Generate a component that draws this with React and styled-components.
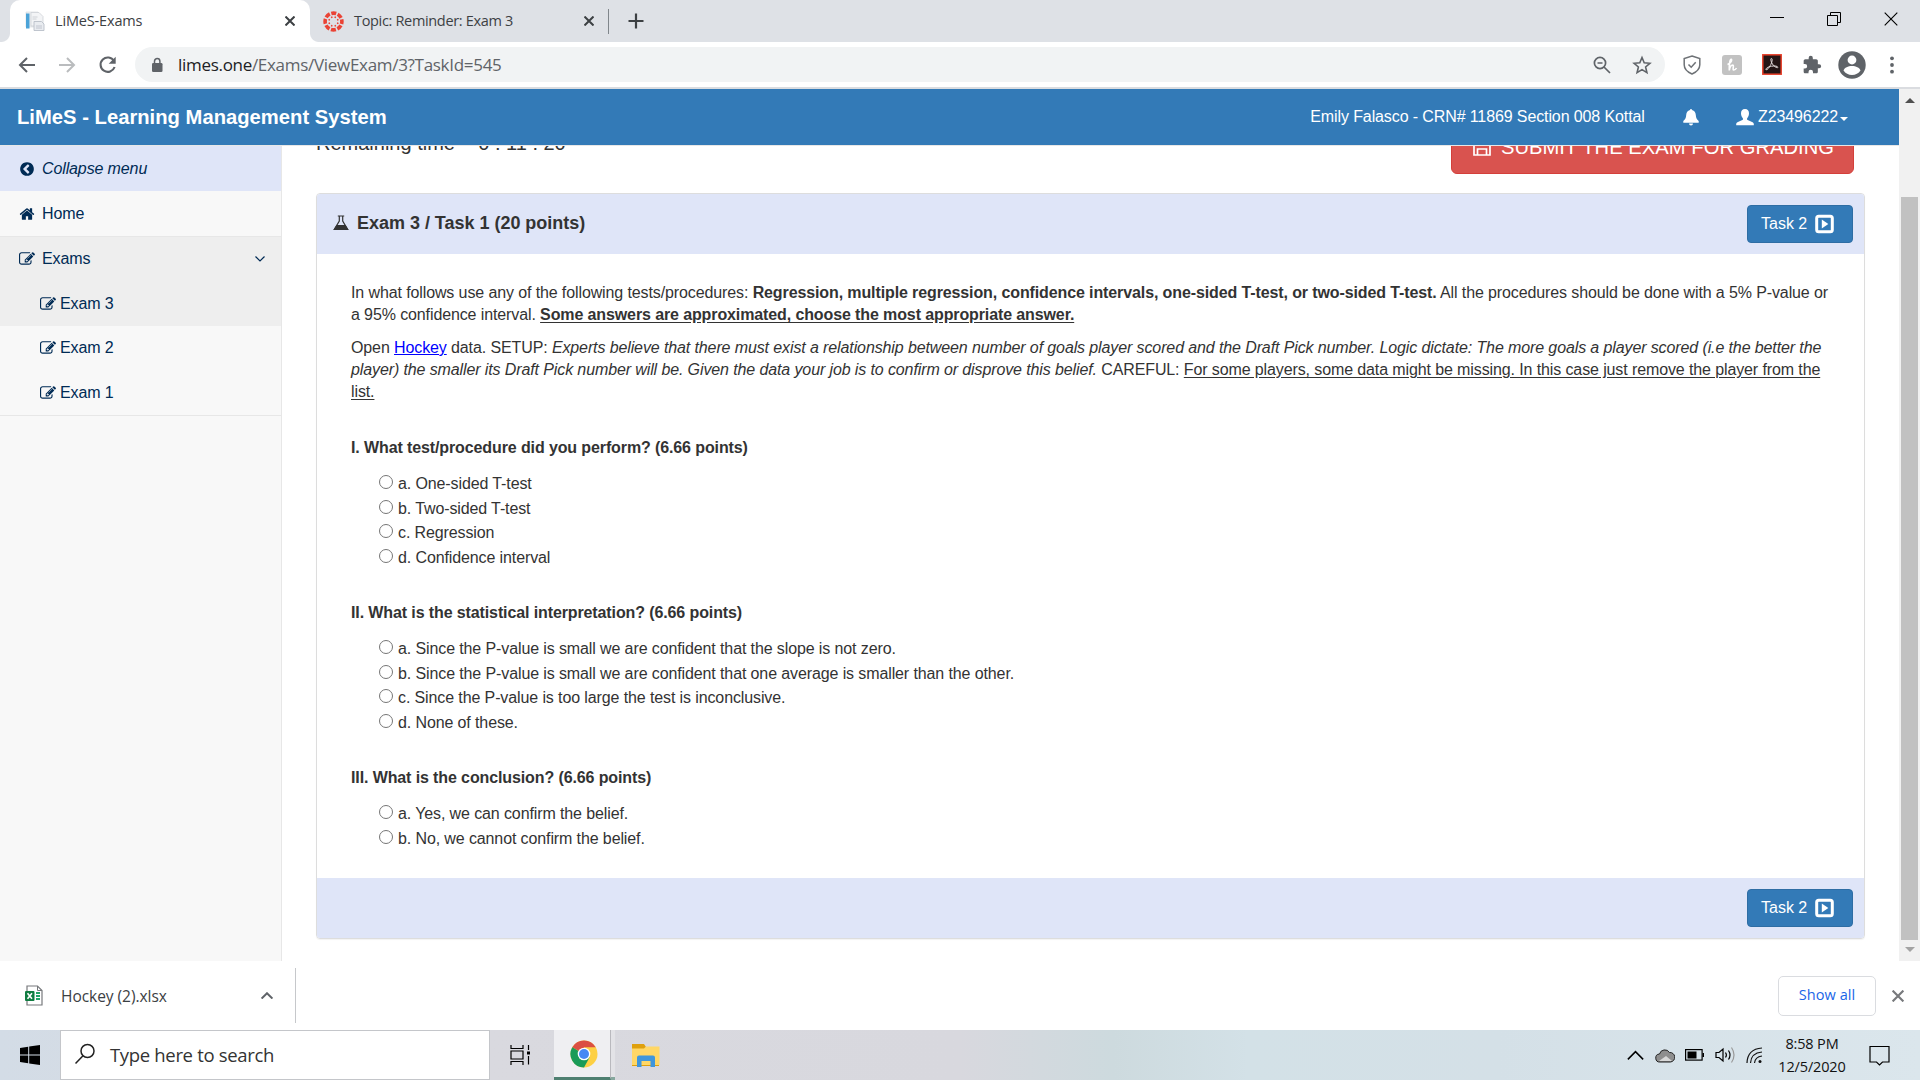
import React from "react";
import styled, { createGlobalStyle } from "styled-components";

const GlobalStyle = createGlobalStyle`
  * { box-sizing: border-box; }
  body {
    margin: 0;
    overflow: hidden;
    background: #fff;
  }
`;

const Screen = styled.div`
  width: 1920px;
  height: 1080px;
  display: flex;
  flex-direction: column;
  overflow: hidden;
  font-family: "Open Sans", "Noto Sans", sans-serif;
  color: #3c4043;
`;

/* browser chrome */

const TabStrip = styled.div`
  height: 42px;
  flex: none;
  display: flex;
  align-items: stretch;
  background: #dee1e6;
  padding-left: 10px;
`;

const Tab = styled.div`
  position: relative;
  width: ${(p) => p.$width}px;
  display: flex;
  align-items: center;
  padding: 0 ${(p) => (p.$active ? 15 : 14)}px 0 ${(p) => p.$pad}px;
  gap: 10px;
  background: ${(p) => (p.$active ? "#fff" : "transparent")};
  border-radius: 10px 10px 0 0;
  font-size: 14.5px;
  letter-spacing: ${(p) => p.$spacing}px;

  /* flared feet of the selected tab */
  &::before,
  &::after {
    content: "";
    display: ${(p) => (p.$active ? "block" : "none")};
    position: absolute;
    bottom: 0;
    width: 9px;
    height: 9px;
  }
  &::before {
    left: -9px;
    background: radial-gradient(circle at 0 0, #dee1e6 8.5px, #fff 9.5px);
  }
  &::after {
    right: -9px;
    background: radial-gradient(circle at 100% 0, #dee1e6 8.5px, #fff 9.5px);
  }
`;

const TabTitle = styled.span`
  flex: 1;
  white-space: nowrap;
  line-height: 20px;
`;

const TabDivider = styled.div`
  width: 1px;
  height: 25px;
  margin: 9px 18px 0 0;
  background: #80868b;
`;

const WindowButtons = styled.div`
  display: flex;
  align-items: center;
  gap: 43px;
  margin-left: auto;
  padding: 0 22px 5px 0;
`;

const Toolbar = styled.div`
  height: 47px;
  flex: none;
  display: flex;
  align-items: center;
  background: #fff;
  border-bottom: 2px solid #dadce0;
  padding: 0 7px 0 17px;
`;

const NavButtons = styled.div`
  display: flex;
  gap: 20px;
  width: 118px;
`;

const Omnibox = styled.div`
  width: 1530px;
  height: 35px;
  display: flex;
  align-items: center;
  border-radius: 18px;
  background: #f1f3f4;
  padding: 0 13px 0 14px;
  gap: 13px;
`;

const OmniboxActions = styled.div`
  display: flex;
  gap: 20px;
`;

const Url = styled.div`
  flex: 1;
  font-size: 17px;
  letter-spacing: -0.3px;
  color: #5f6368;
  line-height: 24px;
  b {
    font-weight: 400;
    color: #202124;
  }
`;

const Extensions = styled.div`
  flex: 1;
  display: grid;
  grid-template-columns: repeat(6, 40px);
  justify-items: center;
  align-items: center;
  margin-left: 7px;
`;

/* page */

const Viewport = styled.div`
  height: 872px;
  flex: none;
  display: flex;
  font-family: "Liberation Sans", Arial, sans-serif;
  font-size: 16px;
  letter-spacing: -0.112px;
  line-height: 22px;
  color: #333;
`;

const Page = styled.div`
  width: 1899px;
  display: flex;
  flex-direction: column;
`;

const Header = styled.header`
  height: 57px;
  flex: none;
  display: flex;
  align-items: center;
  background: #337ab7;
  border-bottom: 1px solid #e7e7e7;
  color: #fff;
  padding: 0 51px 0 17px;
`;

const Brand = styled.div`
  flex: 1;
  font-size: 20.2px;
  font-weight: 700;
  letter-spacing: 0.02px;
  padding-bottom: 1px;
`;

const HeaderItem = styled.div`
  display: flex;
  align-items: center;
  margin-left: ${(p) => p.$gap || 0}px;
`;

const Caret = styled.i`
  border: 4px solid transparent;
  border-top-color: #fff;
  border-bottom: 0;
  margin: 3px 0 0 2px;
`;

const Columns = styled.div`
  flex: 1;
  display: flex;
  min-height: 0;
`;

const Sidebar = styled.nav`
  width: 282px;
  background: #f8f8f8;
  border-right: 1px solid #e7e7e7;
  color: #002b55;
`;

const MenuItem = styled.div`
  height: ${(p) => p.$height || 45}px;
  display: flex;
  align-items: center;
  gap: ${(p) => (p.$child ? 4 : 7)}px;
  padding: 0 16px 0 ${(p) => (p.$child ? 40 : 19)}px;
  background: ${(p) => p.$bg || "transparent"};
  border-bottom: ${(p) => (p.$line ? "1px solid #e7e7e7" : "0")};
  letter-spacing: -0.12px;
  font-style: ${(p) => (p.$italic ? "italic" : "normal")};
  span { flex: 1; }
`;

const Main = styled.main`
  flex: 1;
  padding: 0 34px;
  overflow: hidden;
`;

const TopRow = styled.div`
  display: flex;
  justify-content: space-between;
  height: 47px;
  padding-right: 11px;
`;

const Remaining = styled.div`
  margin-top: -17px;
  font-size: 20px;
  letter-spacing: 0;
  line-height: 28px;
  white-space: pre;
`;

const SubmitButton = styled.div`
  width: 403px;
  height: 52px;
  margin-top: -24px;
  display: flex;
  align-items: center;
  justify-content: center;
  gap: 10px;
  border: 1px solid #d43f3a;
  border-radius: 6px;
  background: #d9534f;
  color: #fff;
  font-size: 20.2px;
  letter-spacing: 0.03px;
  padding: 0 0 2px 2px;
`;

const Panel = styled.section`
  border: 1px solid #ddd;
  border-radius: 4px;
  box-shadow: 0 1px 1px rgba(0, 0, 0, 0.05);
  height: 746px;
  display: flex;
  flex-direction: column;
  overflow: hidden;
`;

const PanelBar = styled.div`
  height: 60px;
  flex: none;
  display: flex;
  align-items: center;
  padding: 0 11px 0 16px;
  background: #dfe5f8;
`;

const PanelTitle = styled.div`
  display: flex;
  align-items: center;
  gap: 8px;
  font-size: 18px;
  font-weight: 700;
  letter-spacing: -0.02px;
  padding-bottom: 2px;
`;

const TaskButton = styled.div`
  width: 106px;
  height: 38px;
  margin-left: auto;
  display: flex;
  align-items: center;
  padding-left: 13px;
  gap: 8px;
  border: 1px solid #2e6da4;
  border-radius: 4px;
  background: #337ab7;
  color: #fff;
  letter-spacing: 0;
`;

const PanelBody = styled.div`
  flex: 1;
  padding: 28px 34px 0;
`;

const Paragraph = styled.p`
  margin: 0 0 11px;
  u { text-underline-offset: 2px; }
`;

const FileLink = styled.a`
  color: #0000ff;
  text-decoration: underline;
`;

const Question = styled.div`
  margin-top: ${(p) => p.$top}px;
`;

const QuestionTitle = styled.div`
  font-weight: 700;
  margin-bottom: 13px;
`;

const Option = styled.label`
  display: flex;
  height: 24.5px;
  align-items: center;
  padding-left: 28px;
  gap: 5px;
`;

const Radio = styled.span`
  width: 14px;
  height: 14px;
  margin-bottom: 4px;
  border: 1px solid #767676;
  border-radius: 50%;
  background: #fff;
`;

const Scrollbar = styled.div`
  width: 21px;
  background: #f1f1f1;
  display: flex;
  flex-direction: column;
  align-items: center;
`;

const ScrollArrow = styled.i`
  border: 5px solid transparent;
  margin: ${(p) => (p.$up ? "4px 0 94px" : "7px 0 0")};
  ${(p) => (p.$up ? "border-bottom-color: #505050;" : "border-top-color: #a3a3a3;")}
`;

const ScrollThumb = styled.div`
  width: 17px;
  height: 743px;
  background: #c1c1c1;
`;

/* downloads */

const DownloadShelf = styled.div`
  height: 69px;
  flex: none;
  display: flex;
  align-items: center;
  background: #fff;
  padding-right: 16px;
`;

const DownloadItem = styled.div`
  width: 296px;
  height: 55px;
  display: flex;
  align-items: center;
  border-right: 1px solid #c6c8cb;
  padding: 0 22px 0 24px;
  gap: 17px;
  font-size: 15.5px;
  letter-spacing: -0.04px;
  span { flex: 1; }
`;

const ShowAll = styled.div`
  width: 98px;
  height: 40px;
  margin: 0 16px 0 auto;
  padding-bottom: 2px;
  border: 1px solid #dadce0;
  border-radius: 5px;
  display: flex;
  align-items: center;
  justify-content: center;
  color: #1a66e8;
  font-size: 14.5px;
  font-weight: 500;
  letter-spacing: 0.1px;
`;

/* taskbar */

const Taskbar = styled.div`
  height: 50px;
  flex: none;
  display: flex;
  align-items: center;
  background: linear-gradient(90deg, #d3dce6 0, #d9d9df 25%, #d8d8de 50%, #cddade 58%, #d3e1e7 65%, #d4e0e7 78%, #dbe6ec 100%);
  color: #111;
`;

const TaskCell = styled.div`
  width: ${(p) => p.$width}px;
  height: 50px;
  display: flex;
  align-items: center;
  justify-content: center;
  padding-right: ${(p) => p.$shift || 0}px;
`;

const ActiveCell = styled(TaskCell)`
  background: #efeff2;
  border-bottom: 3px solid #4f8071;
  border-right: 1px solid #b9b9be;
  padding-left: 3px;
`;

const StackedEdge = styled.div`
  width: 4px;
  height: 50px;
  background: #e3e3e7;
  border-bottom: 3px solid #86a79d;
`;

const SearchBox = styled.div`
  width: 430px;
  height: 50px;
  border: 1px solid #c4c6ca;
  background: #fff;
  display: flex;
  align-items: center;
  gap: 14px;
  padding: 0 0 2px 13px;
  color: #333;
  font-size: 18.5px;
  letter-spacing: -0.33px;
`;

const Tray = styled.div`
  margin-left: auto;
  display: flex;
  align-items: center;
  padding-right: 30px;
`;

const TrayIcons = styled.div`
  display: flex;
  align-items: center;
  gap: 10.5px;
`;

const Clock = styled.div`
  width: 82px;
  margin: 0 16px 1px 8px;
  text-align: center;
  font-size: 14.5px;
  line-height: 23px;
  letter-spacing: -0.15px;
`;

/* icons */

const EditIcon = () => (
  <svg width="16" height="16" viewBox="0 0 1792 1792" fill="currentColor">
    <path d="M888 1184l116-116-152-152-116 116v56h96v96h56zm440-720q-16-16-33 1l-350 350q-17 17-1 33t33-1l350-350q17-17 1-33zm80 594v190q0 119-84.500 203.500t-203.500 84.500h-832q-119 0-203.500-84.500t-84.500-203.500v-832q0-119 84.500-203.500t203.500-84.500h832q63 0 117 25 15 7 18 23 3 17-9 29l-49 49q-14 14-32 8-23-6-45-6h-832q-66 0-113 47t-47 113v832q0 66 47 113t113 47h832q66 0 113-47t47-113v-126q0-13 9-22l64-64q15-15 35-7t20 29zm-96-738l288 288-672 672h-288v-288zm444 132l-92 92-288-288 92-92q28-28 68-28t68 28l152 152q28 28 28 68t-28 68z" />
  </svg>
);

const HomeIcon = () => (
  <svg width="16" height="16" viewBox="0 0 1792 1792" fill="currentColor">
    <path d="M1472 992v480q0 26-19 45t-45 19h-384v-384h-256v384h-384q-26 0-45-19t-19-45v-480q0-1 .5-3t.5-3l575-474 575 474q1 2 1 6zm223-69l-62 74q-8 9-21 11h-3q-13 0-21-7l-692-577-692 577q-12 8-24 7-13-2-21-11l-62-74q-8-10-7-23.500t11-21.500l719-599q32-26 76-26t76 26l244 204v-195q0-14 9-23t23-9h192q14 0 23 9t9 23v408l219 182q10 8 11 21.500t-7 23.500z" />
  </svg>
);

const CollapseIcon = () => (
  <svg width="16" height="16" viewBox="0 0 1792 1792" fill="currentColor">
    <path d="M1037 1395l102-102q19-19 19-45t-19-45l-307-307 307-307q19-19 19-45t-19-45l-102-102q-19-19-45-19t-45 19l-454 454q-19 19-19 45t19 45l454 454q19 19 45 19t45-19zm627-499q0 209-103 385.500t-279.500 279.500-385.500 103-385.500-103-279.500-279.500-103-385.500 103-385.500 279.500-279.500 385.500-103 385.500 103 279.500 279.500 103 385.500z" />
  </svg>
);

const FlaskIcon = () => (
  <svg width="16" height="16" viewBox="0 0 16 16" fill="none" stroke="#333" strokeWidth="1.2">
    <path d="M4.800 1h6.400M6.300 1v5L1.300 14.400h13.400L9.700 6V1" />
    <path d="M3.800 10.500h8.400l2.300 4h-13z" fill="#333" />
  </svg>
);

const PlayIcon = () => (
  <svg width="19" height="20" viewBox="0 0 19 20">
    <rect x="1.700" y="2.200" width="15.600" height="15.600" rx="2" fill="none" stroke="#fff" strokeWidth="3" />
    <path d="M6.800 5.500l6.500 4.500-6.500 4.500z" fill="#fff" />
  </svg>
);

const SaveIcon = () => (
  <svg width="18" height="18" viewBox="0 0 18 18" fill="none" stroke="#fff" strokeWidth="1.700">
    <path d="M1 1h12l4 4v12H1zM4.500 17v-6h9v6M5 1v5h7V1" />
  </svg>
);

const BellIcon = () => (
  <svg width="16" height="17" viewBox="0 0 16 17" fill="#fff">
    <path d="M7 1a1 1 0 0 1 2 0c2.500.5 3.600 2.400 3.800 5 .2 3 .9 4.500 2.900 6v1.800H.3V12c2-1.500 2.700-3 2.900-6C3.400 3.400 4.500 1.500 7 1zM6 14.500h4a2 2 0 0 1-4 0z" />
  </svg>
);

const UserIcon = () => (
  <svg width="18" height="17" viewBox="0 0 18 17" fill="#fff">
    <path d="M9 0c2.700 0 4 1.900 4 4.300 0 2-.7 3.900-1.900 4.900v1.600l5.500 2.500c.8.400 1.200 1 1.200 1.800v1.200H.2v-1.200c0-.8.400-1.400 1.200-1.800l5.500-2.500V9.200C5.700 8.200 5 6.300 5 4.300 5 1.900 6.300 0 9 0z" />
  </svg>
);

const ChevronIcon = ({ up, size = 10, color = "currentColor", weight = 1.2 }) => (
  <svg width={size} height={size * 0.6} viewBox="0 0 10 6" fill="none" stroke={color} strokeWidth={weight}>
    <path d={up ? "M.5 5.500L5 1l4.500 4.500" : "M.5.5L5 5 9.500.5"} />
  </svg>
);

const CrossIcon = ({ size = 10, color = "#3c4043", weight = 2 }) => (
  <svg width={size} height={size} viewBox="0 0 10 10" stroke={color} strokeWidth={weight}>
    <path d="M.5.5l9 9M9.500.5l-9 9" />
  </svg>
);

const PageFavicon = () => (
  <svg width="20" height="20" viewBox="0 0 20 20">
    <path d="M1 1h12v15H1z" fill="#eef0f2" stroke="#d5d8dc" strokeWidth=".6" />
    <path d="M1 2.500h3.500v15H1z" fill="#4ba3d8" />
    <path d="M6 1.500h8l4 4V15H6z" fill="#f3f4f6" stroke="#c9cdd3" strokeWidth=".7" />
    <path d="M7.500 6h5M7.500 8h4" stroke="#c5cad1" strokeWidth=".8" />
    <path d="M9 10.500h7.500l2.500 2.500v6.500H9z" fill="#e9ecf0" stroke="#b9bfc8" strokeWidth=".9" />
    <path d="M11 15h6M11 17h6" stroke="#b6bcc6" strokeWidth=".8" />
  </svg>
);

const CanvasIcon = () => (
  <svg width="21" height="21" viewBox="-10.500 -10.500 21 21">
    <circle r="8.400" fill="none" stroke="#ea4335" strokeWidth="3.600" strokeDasharray="5 1.597" strokeDashoffset="2.500" />
    {[0, 45, 90, 135, 180, 225, 270, 315].map((deg) => (
      <circle key={deg} cx="4.600" r=".9" fill="#ea4335" transform={`rotate(${deg + 22.5})`} />
    ))}
  </svg>
);

const ArrowIcon = ({ flip, color }) => (
  <svg width="20" height="20" viewBox="0 0 20 20" fill="none" stroke={color} strokeWidth="2">
    <path d={flip ? "M2 10h15M10 3l7 7-7 7" : "M18 10H3M10 3l-7 7 7 7"} />
  </svg>
);

const ReloadIcon = () => (
  <svg width="20" height="20" viewBox="-1 0 20 20">
    <path d="M16 6A7.200 7.200 0 1 0 16.600 12" fill="none" stroke="#5f6368" strokeWidth="2.100" />
    <path d="M17.700 1.700v7h-7z" fill="#5f6368" />
  </svg>
);

const LockIcon = () => (
  <svg width="16" height="16" viewBox="0 0 16 16">
    <rect x="3" y="6" width="10.500" height="9" rx="1.300" fill="#5f6368" />
    <path d="M5.500 6.500V4.300a2.700 2.700 0 0 1 5.400 0v2.200" fill="none" stroke="#5f6368" strokeWidth="1.500" />
  </svg>
);

const ZoomIcon = () => (
  <svg width="20" height="20" viewBox="0 0 20 20" fill="none" stroke="#5f6368" strokeWidth="1.700">
    <circle cx="8" cy="8" r="5.600" />
    <path d="M12 12l6 6M5.500 8h5" />
  </svg>
);

const StarIcon = () => (
  <svg width="20" height="20" viewBox="0 0 20 20" fill="none" stroke="#5f6368" strokeWidth="1.600">
    <path d="M10 2.500l2.200 5.300 5.700.5-4.300 3.700 1.300 5.600-4.900-3-4.900 3 1.300-5.600L2.100 8.300l5.700-.5z" />
  </svg>
);

const ShieldIcon = () => (
  <svg width="18" height="20" viewBox="0 0 18 20" fill="none" stroke="#6e7276" strokeWidth="1.500">
    <path d="M9 1l7.800 2.500v6.300c0 4-3 7.200-7.800 9.200-4.800-2-7.800-5.200-7.800-9.200V3.500zM5.500 9.500l2.700 2.700 4.500-5" />
  </svg>
);

const HoneyIcon = () => (
  <svg width="20" height="20" viewBox="0 0 20 20">
    <rect width="20" height="20" rx="3" fill="#c2c2c2" />
    <path d="M5.500 9.500c3-1 5-4.700 3.800-5.200S7 8.500 7.300 15.500c.5-3.500 2-5.500 3.500-5.500s-.6 5 .9 5 2.300-1 2.800-2" fill="none" stroke="#fff" strokeWidth="1.600" />
  </svg>
);

const PdfIcon = () => (
  <svg width="20" height="21" viewBox="0 0 20 21">
    <rect x=".8" y=".8" width="18.400" height="19.400" fill="#241414" stroke="#e8402a" strokeWidth="1.500" />
    <path d="M9.300 4.500c1.700 0 .7 4-1 7-1.300 2.500-3.300 4.500-4.200 4.300-1.200-.6 1.500-3 5.400-3.600 3.700-.6 6.800.1 6.300 1.300-.8 1-4.500-1.600-6-4.500-.9-1.800-1.400-4.500-.5-4.500z" fill="none" stroke="#e6dede" strokeWidth="1" />
  </svg>
);

const PuzzleIcon = () => (
  <svg width="20" height="20" viewBox="0 0 24 24" fill="#5f6368">
    <path d="M20.500 11H19V7c0-1.100-.9-2-2-2h-4V3.500a2.500 2.500 0 0 0-5 0V5H4c-1.100 0-2 .9-2 2v3.800h1.500a2.700 2.700 0 0 1 0 5.400H2V20c0 1.100.9 2 2 2h3.800v-1.500a2.700 2.700 0 0 1 5.400 0V22H17c1.100 0 2-.9 2-2v-4h1.500a2.500 2.500 0 0 0 0-5z" />
  </svg>
);

const AvatarIcon = () => (
  <svg width="28" height="28" viewBox="0 0 28 28">
    <circle cx="14" cy="14" r="13.700" fill="#5f6368" />
    <circle cx="14" cy="9" r="4.400" fill="#fff" />
    <path d="M5.500 19.500c1-3 4.500-4.500 8.500-4.500s7.500 1.500 8.500 4.500c-1.900 2.800-5 4.500-8.500 4.500s-6.600-1.700-8.500-4.500z" fill="#fff" />
  </svg>
);

const DotsIcon = () => (
  <svg width="12" height="18" viewBox="0 0 12 18" fill="#5f6368">
    <circle cx="6" cy="2.300" r="1.900" />
    <circle cx="6" cy="9" r="1.900" />
    <circle cx="6" cy="15.700" r="1.900" />
  </svg>
);

const ExcelIcon = () => (
  <svg width="20" height="21" viewBox="0 0 20 21">
    <path d="M3 1h10.500L18 5.500V20H3z" fill="#fff" stroke="#77797c" strokeWidth="1.200" />
    <path d="M13.500 1v4.500H18" fill="none" stroke="#77797c" />
    <path d="M12 8h4M12 11h4M12 14h4" stroke="#21a366" strokeWidth="1.800" />
    <rect x="1" y="6" width="9.500" height="10" rx="1" fill="#107c41" />
    <path d="M3.500 8.300l4.500 5.500M8 8.300l-4.500 5.500" stroke="#fff" strokeWidth="1.600" />
  </svg>
);

const WindowsIcon = () => (
  <svg width="20" height="20" viewBox="0 0 20 20" fill="#000">
    <path d="M0 3l8.200-1.200v7.700H0zM9.200 1.600L20 0v9.500H9.200zM0 10.500h8.200v7.700L0 17zM9.200 10.500H20V20L9.200 18.400z" />
  </svg>
);

const SearchIcon = () => (
  <svg width="22" height="22" viewBox="0 0 22 22" fill="none" stroke="#222" strokeWidth="1.500">
    <circle cx="13.500" cy="8" r="6.500" />
    <path d="M9 12.700L1.500 20.500" />
  </svg>
);

const TaskViewIcon = () => (
  <svg width="21" height="20" viewBox="0 0 21 20" fill="none" stroke="#000" strokeWidth="1.200">
    <path d="M1 0v3.500h12V0M1 6h12v8H1zM1 20v-3.500h12V20M18.500 0v5M18.500 11v8.500" />
    <path d="M17 6.500h3v3h-3z" fill="#000" stroke="none" />
  </svg>
);

const ChromeIcon = () => (
  <svg width="28" height="28" viewBox="0 0 28 28">
    <circle cx="14" cy="14" r="13.500" fill="#fdd044" />
    <path d="M14 14L2.300 7.200a13.500 13.500 0 0 1 23.400 0H14z" fill="#db4f43" />
    <path d="M2.300 7.200a13.500 13.500 0 0 0 11.700 20.300l5.500-10z" fill="#1a9b58" />
    <circle cx="14" cy="14" r="6.300" fill="#fff" />
    <circle cx="14" cy="14" r="5" fill="#4688f4" />
  </svg>
);

const FolderIcon = () => (
  <svg width="28" height="25" viewBox="0 0 28 25">
    <path d="M0 1h12l2 3h13v19H0z" fill="#dfa00d" />
    <path d="M0 5.500h12l2-2h13.500V22H0z" fill="#ffd766" />
    <path d="M5 24V14.500q0-2 2-2h14q2 0 2 2V24h-4.500v-6h-9v6z" fill="#3f96dc" />
  </svg>
);

const CloudIcon = () => (
  <svg width="20" height="15" viewBox="0 0 20 15" stroke="#222">
    <path d="M5 14a4 4 0 0 1-.5-8A5.500 5.500 0 0 1 14.500 4.500 4.600 4.600 0 0 1 15.500 14z" fill="#8e8e8e" />
    <path d="M4 13l7-5 6 5z" fill="#d8d8d8" stroke="none" />
  </svg>
);

const BatteryIcon = () => (
  <svg width="19" height="12" viewBox="0 0 19 12">
    <rect x=".6" y=".6" width="16.500" height="10.500" fill="none" stroke="#000" strokeWidth="1.200" />
    <path d="M2.500 2.500h9v7h-9zM17.500 4h1.500v4h-1.500z" />
  </svg>
);

const SpeakerIcon = () => (
  <svg width="21" height="18" viewBox="0 0 21 18" fill="none" stroke="#000" strokeWidth="1.200">
    <path d="M1 6.500h3L8 3v12l-4-3.500H1zM10.500 6.500q1.800 2.500 0 5M13.500 4.500q3 4.500 0 9" />
    <path d="M16.500 1.500q5 7.500 0 15" stroke="#999" />
  </svg>
);

const WifiIcon = () => (
  <svg width="17" height="17" viewBox="0 0 17 17" fill="none" stroke="#111" strokeWidth="1.200">
    <path d="M1 16Q1.500 2 16 1M4.500 16Q5 6 16 5M8.500 16Q9 10 16 9" />
    <circle cx="14" cy="14.500" r="1.500" fill="#111" stroke="none" />
  </svg>
);

const NoticeIcon = () => (
  <svg width="21" height="21" viewBox="0 0 21 21" fill="none" stroke="#000" strokeWidth="1.200">
    <path d="M1 1.500h19v15.500h-6.500l-3 3-3-3H1z" />
  </svg>
);

const questions = [
  {
    title: "I. What test/procedure did you perform? (6.66 points)",
    options: ["a. One-sided T-test", "b. Two-sided T-test", "c. Regression", "d. Confidence interval"],
  },
  {
    title: "II. What is the statistical interpretation? (6.66 points)",
    options: [
      "a. Since the P-value is small we are confident that the slope is not zero.",
      "b. Since the P-value is small we are confident that one average is smaller than the other.",
      "c. Since the P-value is too large the test is inconclusive.",
      "d. None of these.",
    ],
  },
  {
    title: "III. What is the conclusion? (6.66 points)",
    options: ["a. Yes, we can confirm the belief.", "b. No, we cannot confirm the belief."],
  },
];

const BrowserTop = () => (
  <>
    <TabStrip>
      <Tab $active $width={300} $pad={15} $spacing={-0.16}>
        <PageFavicon />
        <TabTitle>LiMeS-Exams</TabTitle>
        <CrossIcon />
      </Tab>
      <Tab $width={298} $pad={13} $spacing={-0.33}>
        <CanvasIcon />
        <TabTitle>Topic: Reminder: Exam 3</TabTitle>
        <CrossIcon />
      </Tab>
      <TabDivider />
      <svg width="18" height="42" viewBox="0 0 18 42" stroke="#3c4043" strokeWidth="2.200">
        <path d="M1.500 21h15M9 13.500v15" />
      </svg>
      <WindowButtons>
        <svg width="14" height="14" viewBox="0 0 14 14" stroke="#000"><path d="M0 5.500h14" /></svg>
        <svg width="14" height="14" viewBox="0 0 14 14" fill="none" stroke="#000">
          <path d="M.5 3.500h10v10H.5zM3.500 3.500v-3h10v10h-3" />
        </svg>
        <CrossIcon size={14} color="#000" weight={0.8} />
      </WindowButtons>
    </TabStrip>
    <Toolbar>
      <NavButtons>
        <ArrowIcon color="#5f6368" />
        <ArrowIcon flip color="#babcbe" />
        <ReloadIcon />
      </NavButtons>
      <Omnibox>
        <LockIcon />
        <Url><b>limes.one</b>/Exams/ViewExam/3?TaskId=545</Url>
        <OmniboxActions>
          <ZoomIcon />
          <StarIcon />
        </OmniboxActions>
      </Omnibox>
      <Extensions>
        <ShieldIcon />
        <HoneyIcon />
        <PdfIcon />
        <PuzzleIcon />
        <AvatarIcon />
        <DotsIcon />
      </Extensions>
    </Toolbar>
  </>
);

const SideMenu = () => (
  <Sidebar>
    <MenuItem $bg="#dfe5f8" $italic><CollapseIcon /><span>Collapse menu</span></MenuItem>
    <MenuItem $line $height={46}><HomeIcon /><span>Home</span></MenuItem>
    <MenuItem $bg="#eee" $height={44}><EditIcon /><span>Exams</span><ChevronIcon /></MenuItem>
    <MenuItem $child $bg="#eee"><EditIcon /><span>Exam 3</span></MenuItem>
    <MenuItem $child $height={44}><EditIcon /><span>Exam 2</span></MenuItem>
    <MenuItem $child $line $height={46}><EditIcon /><span>Exam 1</span></MenuItem>
  </Sidebar>
);

const ExamPanel = () => (
  <Panel>
    <PanelBar>
      <PanelTitle><FlaskIcon />Exam 3 / Task 1 (20 points)</PanelTitle>
      <TaskButton>Task 2 <PlayIcon /></TaskButton>
    </PanelBar>
    <PanelBody>
      <Paragraph>
        In what follows use any of the following tests/procedures: <b>Regression, multiple regression, confidence intervals, one-sided T-test, or two-sided T-test.</b> All the procedures should be done with a 5% P-value or a 95% confidence interval. <b><u>Some answers are approximated, choose the most appropriate answer.</u></b>
      </Paragraph>
      <Paragraph>
        Open <FileLink>Hockey</FileLink> data. SETUP: <i>Experts believe that there must exist a relationship between number of goals player scored and the Draft Pick number. Logic dictate: The more goals a player scored (i.e the better the player) the smaller its Draft Pick number will be. Given the data your job is to confirm or disprove this belief.</i> CAREFUL: <u>For some players, some data might be missing. In this case just remove the player from the list.</u>
      </Paragraph>
      {questions.map((q, i) => (
        <Question key={q.title} $top={i === 0 ? 34 : 32}>
          <QuestionTitle>{q.title}</QuestionTitle>
          {q.options.map((option) => (
            <Option key={option}><Radio />{option}</Option>
          ))}
        </Question>
      ))}
    </PanelBody>
    <PanelBar>
      <TaskButton>Task 2 <PlayIcon /></TaskButton>
    </PanelBar>
  </Panel>
);

const App = () => (
  <Screen>
    <GlobalStyle />
    <BrowserTop />
    <Viewport>
      <Page>
        <Header>
          <Brand>LiMeS - Learning Management System</Brand>
          <HeaderItem>Emily Falasco - CRN# 11869 Section 008 Kottal</HeaderItem>
          <HeaderItem $gap={38}><BellIcon /></HeaderItem>
          <HeaderItem $gap={37}><UserIcon />&nbsp;Z23496222<Caret /></HeaderItem>
        </Header>
        <Columns>
          <SideMenu />
          <Main>
            <TopRow>
              <Remaining>Remaining time -  0 : 11 : 20</Remaining>
              <SubmitButton><SaveIcon />SUBMIT THE EXAM FOR GRADING</SubmitButton>
            </TopRow>
            <ExamPanel />
          </Main>
        </Columns>
      </Page>
      <Scrollbar>
        <ScrollArrow $up />
        <ScrollThumb />
        <ScrollArrow />
      </Scrollbar>
    </Viewport>
    <DownloadShelf>
      <DownloadItem>
        <ExcelIcon />
        <span>Hockey (2).xlsx</span>
        <ChevronIcon up size={12} color="#5f6368" weight={1.6} />
      </DownloadItem>
      <ShowAll>Show all</ShowAll>
      <CrossIcon size={12} color="#77797c" weight={1.8} />
    </DownloadShelf>
    <Taskbar>
      <TaskCell $width={60}><WindowsIcon /></TaskCell>
      <SearchBox><SearchIcon />Type here to search</SearchBox>
      <TaskCell $width={64} $shift={3}><TaskViewIcon /></TaskCell>
      <ActiveCell $width={57}><ChromeIcon /></ActiveCell>
      <StackedEdge />
      <TaskCell $width={62}><FolderIcon /></TaskCell>
      <Tray>
        <TrayIcons>
          <ChevronIcon up size={17} color="#000" weight={0.9} />
          <CloudIcon />
          <BatteryIcon />
          <SpeakerIcon />
          <WifiIcon />
        </TrayIcons>
        <Clock>8:58 PM<br />12/5/2020</Clock>
        <NoticeIcon />
      </Tray>
    </Taskbar>
  </Screen>
);

export default App;
